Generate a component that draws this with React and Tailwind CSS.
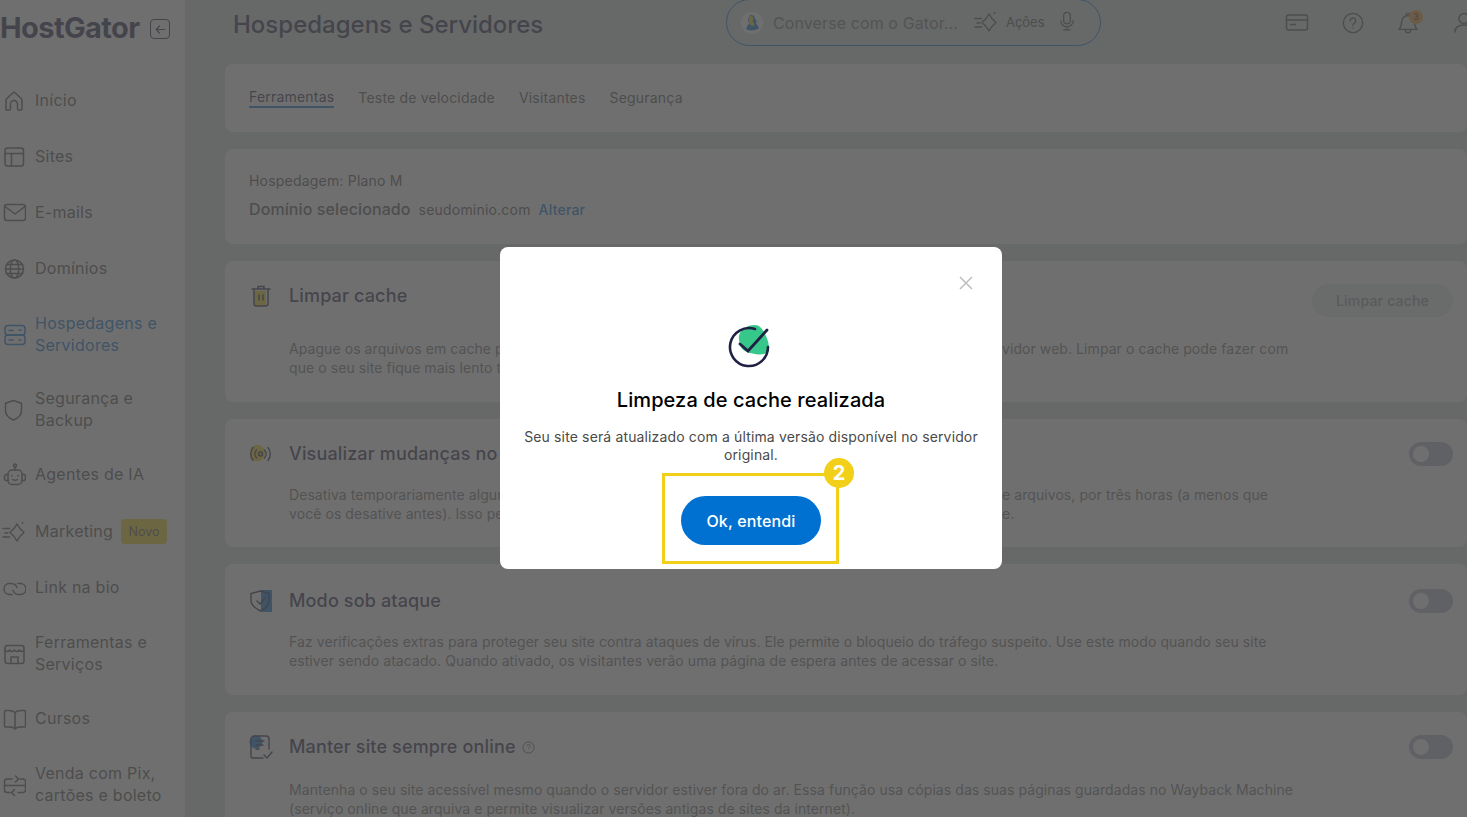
import React from "react";

const S = ({ children, className = "w-6 h-6", vb = "0 0 24 24" }) => (
  <svg viewBox={vb} fill="none" stroke="currentColor" strokeWidth="1.5" strokeLinecap="round" strokeLinejoin="round" className={className}>
    {children}
  </svg>
);

const icons = {
  home: <S><path d="M4 21V11.5C4 10.6 4.3 9.9 5 9.2L12 3l7 6.2c.7.7 1 1.4 1 2.3V20a1 1 0 0 1-1 1h-2.5a1 1 0 0 1-1-1v-5a3.5 3.5 0 0 0-7 0v5a1 1 0 0 1-1 1H5" /></S>,
  sites: <S><rect x="3" y="3" width="18.5" height="18" rx="2.5" /><path d="M3 8.5h18.5M9.5 8.500V21" /></S>,
  mail: <S><rect x="2.5" y="3.500" width="21" height="16" rx="2.5" /><path d="M3 5.500l10 7.500 10-7.500" /></S>,
  globe: <S><circle cx="12.500" cy="12" r="9" /><path d="M3.500 12h18M4.500 7.500h16M4.500 16.500h16" /><ellipse cx="12.500" cy="12" rx="4.200" ry="9" /></S>,
  server: <S><rect x="3" y="2.5" width="20" height="9.5" rx="3" /><rect x="3" y="12" width="20" height="9.5" rx="3" /><path d="M7 7.500h4M7 17h4M17 7h2M17 17h2" /></S>,
  shield: <S><path d="M11.500 2.500l8 2.800v7.200c0 4.400-3.400 7.600-8 9.500-4.600-1.900-8-5.100-8-9.500V5.300z" /></S>,
  bot: <S><circle cx="13" cy="2.500" r="1.500" /><path d="M13 4V7" /><rect x="6" y="7" width="14" height="14.500" rx="4" /><path d="M6 11.500H4.500a2 2 0 0 0-2 2v2a2 2 0 0 0 2 2H6M20 11.500h1.500a2 2 0 0 1 2 2v2a2 2 0 0 1-2 2H20" /><path d="M10 12.500v.5M16 12.500v.5M10.500 16.500c1.500 1 3.500 1 5 0" /></S>,
  spark: <S><path d="M15 4c2 3.800 3.800 6 7 8.500-3.200 2.500-5 4.700-7 8.500-2-3.800-3.800-6-7-8.500 3.200-2.500 5-4.700 7-8.500z" /><path d="M20.500 2.500v.8M1 8.500h6.500M3 13h3M1 17h6.500" /></S>,
  link: <S><path d="M10 18.500H7.500a5.500 5.500 0 0 1-1-10.900c3.500-.6 7.500.4 8.500 4" /><path d="M16 7.500h2.500a5.500 5.500 0 0 1 1 10.900c-3.500.6-7.500-.4-8.500-4" /></S>,
  store: <S><rect x="3" y="3.500" width="19" height="18" rx="2.500" /><path d="M3 8c1.500 2 3.500 2 4.700 0 1.200 2 3.400 2 4.800 0 1.400 2 3.600 2 4.800 0 1.200 2 3.200 2 4.700 0" /><path d="M9 21.500V15h7v6.500" /></S>,
  book: <S><path d="M13 5.500C11.500 4 9.500 3.500 7 3.500H3.500a1 1 0 0 0-1 1V19a1 1 0 0 0 1 1H8c2 0 3.800.5 5 2 1.200-1.500 3-2 5-2h4.500a1 1 0 0 0 1-1V4.500a1 1 0 0 0-1-1H19c-2.500 0-4.500.5-6 2zM13 5.500V22" /></S>,
  pay: <S><path d="M10 6H5a2.500 2.500 0 0 0-2.500 2.500V17A2.500 2.500 0 0 0 5 19.500h3M18 6h3a2.500 2.500 0 0 1 2.500 2.500V17a2.500 2.500 0 0 1-2.500 2.500h-5M2.500 12.500h21" /><path d="M13.500 3l3 3-3 3M12.500 16.500l-3 3 3 3" /></S>,
};

const nav = [
  { icon: "home", label: "Início" },
  { icon: "sites", label: "Sites" },
  { icon: "mail", label: "E-mails" },
  { icon: "globe", label: "Domínios" },
  { icon: "server", label: "Hospedagens e Servidores", active: true },
  { icon: "shield", label: "Segurança e Backup" },
  { icon: "bot", label: "Agentes de IA" },
  { icon: "spark", label: "Marketing", badge: true },
  { icon: "link", label: "Link na bio" },
  { icon: "store", label: "Ferramentas e Serviços" },
  { icon: "book", label: "Cursos" },
  { icon: "pay", label: "Venda com Pix, cartões e boleto" },
];

const Toggle = () => (
  <div className="w-[44px] h-[24px] rounded-full bg-[#AEB2C4] flex items-center pl-[4px] shrink-0">
    <div className="w-[16px] h-[16px] rounded-full bg-white" />
  </div>
);

const TrashIcon = () => (
  <svg viewBox="0 0 24 24" className="w-[24px] h-[24px]" fill="none" stroke="#1F2044" strokeWidth="1.500" strokeLinecap="round">
    <path d="M4 7h13v13a2 2 0 0 1-2 2H6z" fill="#F2CF19" stroke="none" />
    <path d="M5 5v14.500A2.500 2.500 0 0 0 7.500 22h9a2.500 2.500 0 0 0 2.500-2.500V5M3 5h18M9 4V2.500h6V4M10 11v5M14 11v5" />
  </svg>
);
const WaveIcon = () => (
  <svg viewBox="0 0 24 24" className="w-[24px] h-[24px]" fill="none" stroke="#1F2044" strokeWidth="1.400" strokeLinecap="round">
    <path d="M9 2a10 10 0 0 1 4 19c-6 2-12-2-12-9s4-9 8-10z" fill="#F2CF19" stroke="none" transform="translate(0 1) scale(.85)" />
    <circle cx="11.500" cy="12" r="2" />
    <path d="M7.500 8a6 6 0 0 0 0 8M15.500 8a6 6 0 0 1 0 8M4 5.500a10.500 10.500 0 0 0 0 13M19 5.500a10.500 10.500 0 0 1 0 13" />
  </svg>
);
const ShieldIcon = () => (
  <svg viewBox="0 0 24 24" className="w-[24px] h-[24px]" fill="none" stroke="#1F2044" strokeWidth="1.400" strokeLinecap="round" strokeLinejoin="round">
    <rect x="12" y="1" width="11" height="22" fill="#0070D1" stroke="none" />
    <path d="M11.500 2L20 4.500v7c0 5-3.500 8-8.500 10.500C6.500 19.500 2 16.500 2 11.500v-7z" />
    <path d="M8 12l3 3 5-6" />
  </svg>
);
const DocIcon = () => (
  <svg viewBox="0 0 24 24" className="w-[24px] h-[24px]" fill="none" stroke="#1F2044" strokeWidth="1.400" strokeLinecap="round" strokeLinejoin="round">
    <circle cx="7" cy="7" r="6.500" fill="#0070D1" stroke="none" />
    <path d="M14 23H4a2 2 0 0 1-2-2V4a3 3 0 0 1 3-3h12a3 3 0 0 1 3 3v10M7 6h8M7 10h7M7 14h3M15 20l3 3 5-6" />
  </svg>
);

const cards = [
  {
    icon: <TrashIcon />, title: "Limpar cache", body: "mt-[22px]", pad: "pt-[23px] pb-[25px]", button: true,
    lines: [
      ["Apague os arquivos em cache para ver a versão mais", "vidor web. Limpar o cache pode fazer com"],
      ["que o seu site fique mais lento temporariamente", ""],
    ],
  },
  {
    icon: <WaveIcon />, title: "Visualizar mudanças no site", body: "mt-[19px]", pad: "pt-[23px] pb-[24px]", toggle: true,
    lines: [
      ["Desativa temporariamente alguns recursos de cache", "e arquivos, por três horas (a menos que"],
      ["você os desative antes). Isso permite ver as alterações", "e."],
    ],
  },
  {
    icon: <ShieldIcon />, title: "Modo sob ataque", body: "mt-[19px]", pad: "pt-[25px] pb-[25px]", toggle: true,
    lines: [
      ["Faz verificações extras para proteger seu site contra ataques de vírus. Ele permite o bloqueio do tráfego suspeito. Use este modo quando seu site"],
      ["estiver sendo atacado. Quando ativado, os visitantes verão uma página de espera antes de acessar o site."],
    ],
  },
  {
    icon: <DocIcon />, title: "Manter site sempre online", help: true, body: "mt-[21px]", pad: "pt-[23px] pb-[20px]", toggle: true,
    lines: [
      ["Mantenha o seu site acessível mesmo quando o servidor estiver fora do ar. Essa função usa cópias das suas páginas guardadas no Wayback Machine"],
      ["(serviço online que arquiva e permite visualizar versões antigas de sites da internet)."],
    ],
  },
];

function NavItem({ item }) {
  return (
    <div className={`flex items-center gap-[9px] py-4 pl-[2px] ${item.active ? "text-[#0070D1]" : "text-[#4a4a4a]"}`}>
      <span className="w-6 h-6 shrink-0 flex items-center justify-center">{icons[item.icon]}</span>
      <span className="text-[16px] tracking-[0.25px] leading-[21.500px] w-[140px]">
        {item.badge ? (
          <span className="flex items-center gap-[8px] whitespace-nowrap">
            {item.label}
            <span className="w-[46px] h-[25px] rounded-[4px] bg-[#F2CF19] text-[12.500px] tracking-normal flex items-center justify-center text-[#4a4a4a]">Novo</span>
          </span>
        ) : item.label}
      </span>
    </div>
  );
}

export default function App() {
  return (
    <div className="relative w-full h-[817px] overflow-hidden flex bg-[#D4DAD8]" style={{ fontFamily: "Inter, 'Noto Sans', sans-serif" }}>
      <aside className="w-[185px] shrink-0 bg-white flex flex-col">
        <div className="h-[73px] shrink-0 flex items-start pt-[10px]">
          <span className="text-[29px] leading-[36px] font-bold text-[#1F2044] tracking-[-0.6px]">HostGator</span>
          <span className="ml-[11px] mt-[9px] w-[20px] h-[20px] rounded-[4px] border-[1.500px] border-[#1F2044] flex items-center justify-center text-[#1F2044]">
            <svg viewBox="0 0 14 14" className="w-[13px] h-[13px]" fill="none" stroke="currentColor" strokeWidth="1.300" strokeLinecap="round" strokeLinejoin="round"><path d="M11.500 7h-9M6 3L2.500 7 6 11" /></svg>
          </span>
        </div>
        {nav.map((n) => <NavItem key={n.label} item={n} />)}
      </aside>

      <main className="flex-1 min-w-0 pl-[40px] flex flex-col">
        <header className="h-[64px] shrink-0 flex items-start pl-[8px] text-[#4a4a4a]">
          <h1 className="w-[493px] shrink-0 text-[24px] leading-[50px] font-medium text-[#1F2044] whitespace-nowrap">Hospedagens e Servidores</h1>
          <div className="w-[375px] h-[47px] -mt-[1px] shrink-0 rounded-full border border-[#0070D1] flex items-center pl-[13px]">
            <svg viewBox="0 0 24 24" className="w-[24px] h-[24px] shrink-0"><circle cx="12" cy="12" r="11.500" fill="#fff" stroke="#ddd" /><path d="M11 4c3 0 4 2 4 4 2 1 2 3 1 4l3 5c-2 3-11 3-13 1 1-3 3-4 3-7-2-1-1-6 2-7z" fill="#0070D1" /><path d="M10 5c3 0 4 2 3 4s2 3 1 6c-2 0-5-1-5-4s-1-5 1-6z" fill="#F2CF19" /></svg>
            <span className="ml-[9px] text-[16px] tracking-[0.1px] text-[#6a6a6a] whitespace-nowrap">Converse com o Gator...</span>
            <span className="ml-[16px] w-[24px] h-[24px] shrink-0 -mt-[1px]">{icons.spark}</span>
            <span className="ml-[8px] text-[13px]">Ações</span>
            <svg viewBox="0 0 24 24" className="ml-[12px] w-[20px] h-[20px] shrink-0 -mt-[4px]" fill="none" stroke="currentColor" strokeWidth="1.500" strokeLinecap="round"><rect x="8" y="1.500" width="8" height="14" rx="4" /><path d="M4.500 11.500a7.500 7.500 0 0 0 15 0M12 19v3M8 22.500h8" /></svg>
          </div>
          <div className="ml-[184px] flex items-start mt-[11px] gap-[33px]">
            <svg viewBox="0 0 24 24" className="w-[24px] h-[24px]" fill="none" stroke="currentColor" strokeWidth="1.500" strokeLinecap="round"><rect x="1.500" y="4" width="21" height="15" rx="2" /><path d="M1.500 9h21M5.500 13.500h5" /></svg>
            <svg viewBox="0 0 24 24" className="w-[22px] h-[22px] mt-[1px]" fill="none" stroke="currentColor" strokeWidth="1.500" strokeLinecap="round"><circle cx="12" cy="12" r="10.500" /><path d="M9 9.500a3 3 0 1 1 4.500 2.600c-1 .6-1.500 1.200-1.500 2.400M12 17.500v.1" /></svg>
            <span className="relative w-[22px] h-[24px] mt-[1px]">
              <svg viewBox="0 0 24 24" className="w-[22px] h-[22px]" fill="none" stroke="currentColor" strokeWidth="1.500" strokeLinecap="round" strokeLinejoin="round"><path d="M2 19c2-2 3-4 3-8a7 7 0 0 1 14 0c0 4 1 6 3 8zM9 19.500a3 3 0 0 0 6 0M10 3.500a2 2 0 1 1 4 0" /></svg>
              <span className="absolute -top-[2px] left-[12px] w-[14px] h-[14px] rounded-full bg-[#F59A23] text-[9px] leading-[14px] text-center text-[#1F2044]">3</span>
            </span>
            <svg viewBox="0 0 24 24" className="w-[24px] h-[24px]" fill="none" stroke="currentColor" strokeWidth="1.500" strokeLinecap="round"><circle cx="12" cy="7.500" r="5" /><path d="M3 21c0-5 3-7 9-7s9 2 9 7" /></svg>
          </div>
        </header>

        <div className="flex flex-col gap-[17px]">
          <section className="h-[68px] bg-white rounded-[8px] pl-[24px] flex gap-[24px] pt-[23px] text-[14px] tracking-[0.2px] text-[#4a4a4a]">
            <span className="h-[21px] border-b-2 border-[#0070D1] leading-[20px] text-[#1F2044]">Ferramentas</span>
            <span className="leading-[22px]">Teste de velocidade</span>
            <span className="leading-[22px]">Visitantes</span>
            <span className="leading-[22px]">Segurança</span>
          </section>

          <section className="h-[95px] bg-white rounded-[8px] pl-[24px] pt-[22px] text-[#4a4a4a]">
            <div className="text-[14px] tracking-[0.2px] leading-[20px]">Hospedagem: Plano M</div>
            <div className="mt-[7px] flex items-baseline gap-[8px] leading-[22px]">
              <span className="text-[16px] tracking-[0.1px] font-medium">Domínio selecionado</span>
              <span className="text-[14px] tracking-[0.2px]">seudominio.com</span>
              <span className="text-[14px] tracking-[0.2px] font-medium text-[#0070D1]">Alterar</span>
            </div>
          </section>

          {cards.map((c) => (
            <section key={c.title} className={`bg-white rounded-[8px] pl-[24px] pr-[14px] ${c.pad}`}>
              <div className="flex items-start">
                <span className="w-[40px] shrink-0 h-[24px]">{c.icon}</span>
                <h2 className="text-[18px] tracking-[0.15px] leading-[24px] font-medium text-[#1F2044] whitespace-nowrap flex items-center gap-[6px]">
                  {c.title}
                  {c.help && (
                    <svg viewBox="0 0 14 14" className="w-[13px] h-[13px]" fill="none" stroke="#4a4a4a" strokeWidth="1"><circle cx="7" cy="7" r="6" /><path d="M5.300 5.500a1.700 1.700 0 1 1 2.500 1.500c-.5.3-.8.600-.8 1.200M7 10v.1" /></svg>
                  )}
                </h2>
                <span className="flex-1" />
                {c.button && (
                  <span className="w-[141px] h-[33px] rounded-full bg-[#E4E9E8] text-[14px] tracking-[0.2px] font-medium text-[#8a8f98] flex items-center justify-center">Limpar cache</span>
                )}
                {c.toggle && <Toggle />}
              </div>
              <div className={`${c.body} ml-[40px] text-[14px] tracking-[0.07px] leading-[19px] text-[#6b6b6b]`}>
                {c.lines.map((l, i) => (
                  <div key={i} className="flex whitespace-nowrap">
                    {l.length > 1 ? <span className="w-[713px] shrink-0 overflow-hidden">{l[0]}</span> : <span>{l[0]}</span>}
                    {l[1] && <span>{l[1]}</span>}
                  </div>
                ))}
              </div>
            </section>
          ))}
        </div>
      </main>

      <div className="absolute inset-0 bg-[rgba(77,77,77,0.81)]" />

      <div className="absolute left-[500px] top-[247px] w-[502px] h-[322px] bg-white rounded-[8px] flex flex-col items-center" role="dialog">
        <svg viewBox="0 0 14 14" className="absolute right-[29px] top-[29px] w-[14px] h-[14px]" fill="none" stroke="#BDBDBD" strokeWidth="1.500"><path d="M1 1l12 12M13 1L1 13" /></svg>
        <svg viewBox="0 0 44 44" className="mt-[77px] -ml-[4px] w-[44px] h-[44px] shrink-0" fill="none" strokeLinecap="round">
          <path d="M13 9c3-5 8-8 15-8 5 0 8 5 10 9 3 6 5 12 3 17-2 4-8 4-13 3-7-1-14-3-15-10-1-4-2-7 0-11z" fill="#35C88A" />
          <path d="M28 5A19 19 0 1 0 41 23" stroke="#1F2044" strokeWidth="2.600" />
          <path d="M13 20l8 7L40 6" stroke="#1F2044" strokeWidth="2.800" />
        </svg>
        <h3 className="mt-[18px] text-[20px] leading-[28px] font-medium text-black whitespace-nowrap tracking-[0.1px]">Limpeza de cache realizada</h3>
        <p className="mt-[14px] w-[470px] text-center text-[14px] tracking-[0.14px] leading-[18px] text-[#4a4a4a]">Seu site será atualizado com a última versão disponível no servidor original.</p>
        <button className="mt-[32px] w-[140px] h-[49px] shrink-0 rounded-full bg-[#0070D1] text-white text-[16px] tracking-[0.15px] font-medium">Ok, entendi</button>
        <div className="absolute left-[162px] top-[226px] w-[177px] h-[91px] border-[3px] border-[#F2CF19]" />
        <div className="absolute left-[324px] top-[211px] w-[30px] h-[30px] rounded-full bg-[#F2CF19] text-white text-[20px] leading-[30px] font-bold text-center">2</div>
      </div>
    </div>
  );
}
